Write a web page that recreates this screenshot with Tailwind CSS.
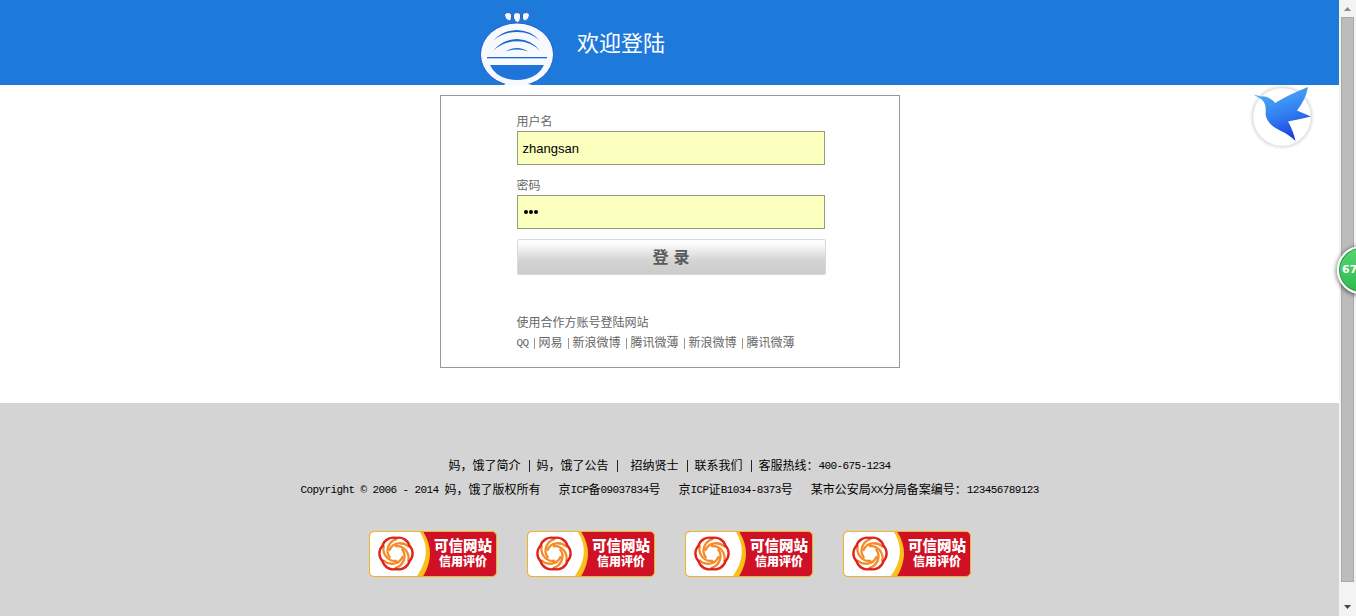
<!DOCTYPE html>
<html lang="zh-CN">
<head>
<meta charset="utf-8">
<title>欢迎登陆</title>
<script src="https://cdn.jsdelivr.net/npm/@tailwindcss/browser@4"></script>
</head>
<body class="relative flex h-[616px] w-[1356px] overflow-hidden bg-white font-['Liberation_Sans','Noto_Sans_CJK_SC',sans-serif]">
<svg class="absolute h-0 w-0" aria-hidden="true">
  <defs>
    <g id="petal">
      <path d="M39.500 15C34 10 24 10.500 20.500 18.500" stroke="#f58a28" stroke-width="2.300"/>
      <path d="M27 6.500A11 11 0 0 1 40.400 14.250" stroke="#e0241c" stroke-width="2.400"/>
    </g>
    <symbol id="trust" viewBox="0 0 128 46">
      <rect x=".5" y=".5" width="127" height="45" rx="4.5" fill="#d01024"/>
      <path d="M5 .5H54Q68 22 54 45.500H5Q.5 45.500 .5 41V5Q.5 .5 5 .5Z" fill="#f8c018"/>
      <path d="M5 1H51Q64 22 48 45H5Q1 45 1 41V5Q1 1 5 1Z" fill="#fff"/>
      <rect x=".5" y=".5" width="127" height="45" rx="4.500" fill="none" stroke="#f0b428"/>
      <g fill="none" stroke-linecap="round" transform="translate(0 .5)">
        <use href="#petal"/>
        <use href="#petal" transform="rotate(60 27 22)"/>
        <use href="#petal" transform="rotate(120 27 22)"/>
        <use href="#petal" transform="rotate(180 27 22)"/>
        <use href="#petal" transform="rotate(240 27 22)"/>
        <use href="#petal" transform="rotate(300 27 22)"/>
      </g>
    </symbol>
  </defs>
</svg>

<div class="flex w-[1339px] flex-col">
  <header class="flex h-[85px] shrink-0 bg-[#1e7ada] pl-[479px]">
    <svg class="h-[85px] w-[76px]" viewBox="479 0 76 85">
      <g fill="#f6faff" stroke="#1b55cc" stroke-width=".9">
        <path d="M504.500 15Q504.500 12.500 508 12.500Q511.500 12.500 511.500 15V18Q511 21 509 21Q504.500 19 504.500 15Z"/>
        <path d="M513.500 15Q513.500 12.500 517 12.500Q520.500 12.500 520.500 15V18Q520 22.500 517.500 22.500Q515 22.500 513.500 18Z"/>
        <path d="M529.500 15Q529.500 12.500 526 12.500Q522.500 12.500 522.500 15V18Q523 21 525 21Q529.500 19 529.500 15Z"/>
        <ellipse cx="517" cy="54.500" rx="36.500" ry="31.500"/>
      </g>
      <path d="M503 85Q517 79 532 85Z" fill="#f6faff"/>
      <path d="M490 65H544Q539 76 526 79Q517 81 508 79Q495 76 490 65Z" fill="#1e74d8"/>
      <g fill="#1b66cf">
        <path d="M493 41Q502 30.500 517 30Q532 30.500 540 41Q531 32 517 32Q503 32 493 41Z"/>
        <path d="M493 51Q502 39.500 517 39Q532 39.500 540 51Q531 41.300 517 41.300Q503 41.300 493 51Z"/>
        <path d="M505 51.500Q511 48 517 48Q523 48 528 51.500Q523 49.500 517 49.500Q511 49.500 505 51.500Z"/>
        <rect x="487" y="57" width="60" height="1.300"/>
      </g>
    </svg>
    <h1 class="ml-[22px] mt-[28px] text-[22px] leading-[32px] text-white">欢迎登陆</h1>
  </header>

  <main class="flex h-[318px] shrink-0 justify-center pt-[10px]">
    <form class="flex h-[273px] w-[460px] flex-col border border-[#93999f] pl-[76px] text-[12px] text-[#666]">
      <label class="mt-[17px] h-[18px] leading-[19px]">用户名</label>
      <div class="flex h-[34px] w-[308px] items-center border border-[#989b82] bg-[#faffbd] pl-[5px] pt-[2px] text-[13px] text-black">zhangsan</div>
      <label class="mt-[12px] h-[18px] leading-[19px]">密码</label>
      <div class="flex h-[34px] w-[308px] items-center gap-[1px] border border-[#989b82] bg-[#faffbd] pl-[6px]">
        <span class="size-[4px] rounded-full bg-black"></span><span class="size-[4px] rounded-full bg-black"></span><span class="size-[4px] rounded-full bg-black"></span>
      </div>
      <div class="mt-[10px] flex h-[36px] w-[309px] items-center justify-center gap-[5px] rounded-[2px] border border-[#d6d9e4] bg-linear-to-b from-[#fdfdfd] from-10% via-[#d4d4d4] via-60% to-[#cbcbcb] pt-[2px] text-[16px] font-bold text-[#5a5a5a]"><span>登</span><span>录</span></div>
      <p class="mt-[38px] h-[20px] leading-[20px]">使用合作方账号登陆网站</p>
      <div class="flex h-[20px] items-center leading-[20px]">
        <span class="w-[12px] font-['Liberation_Mono',monospace] text-[11px] tracking-[-0.600px]">QQ</span>
        <i class="ml-[5px] mr-[4px] h-[11px] w-px bg-[#999]"></i><span class="w-[24px]">网易</span>
        <i class="ml-[5px] mr-[4px] h-[11px] w-px bg-[#999]"></i><span class="w-[48px]">新浪微博</span>
        <i class="ml-[5px] mr-[4px] h-[11px] w-px bg-[#999]"></i><span class="w-[48px]">腾讯微薄</span>
        <i class="ml-[5px] mr-[4px] h-[11px] w-px bg-[#999]"></i><span class="w-[48px]">新浪微博</span>
        <i class="ml-[5px] mr-[4px] h-[11px] w-px bg-[#999]"></i><span class="w-[48px]">腾讯微薄</span>
      </div>
    </form>
  </main>

  <footer class="flex h-[213px] shrink-0 flex-col bg-[#d4d4d4] pt-[51px] text-[12px] leading-[24px] whitespace-pre text-black">
    <div class="flex h-[24px] items-center pl-[448.500px]">
      <span class="w-[72px]">妈，饿了简介</span><i class="ml-[8.500px] mr-[6.500px] h-[12px] w-px bg-[#222]"></i>
      <span class="w-[72px]">妈，饿了公告</span><i class="ml-[8.500px] mr-[12.500px] h-[12px] w-px bg-[#222]"></i>
      <span class="w-[48px]">招纳贤士</span><i class="ml-[8.500px] mr-[6.500px] h-[12px] w-px bg-[#222]"></i>
      <span class="w-[48px]">联系我们</span><i class="ml-[8.500px] mr-[6.500px] h-[12px] w-px bg-[#222]"></i>
      <span class="w-[60px]">客服热线：</span><span class="font-['Liberation_Mono',monospace] text-[11px] tracking-[-0.600px]">400-675-1234</span>
    </div>
    <div class="flex h-[24px] items-center pl-[300.500px]">
      <span class="w-[144px] font-['Liberation_Mono',monospace] text-[11px] tracking-[-0.600px]">Copyright © 2006 - 2014</span><span class="w-[114px]">妈，饿了版权所有</span>
      <span>京</span><span class="font-['Liberation_Mono',monospace] text-[11px] tracking-[-0.600px]">ICP</span><span>备</span><span class="font-['Liberation_Mono',monospace] text-[11px] tracking-[-0.600px]">09037834</span><span class="mr-[18px]">号</span>
      <span>京</span><span class="font-['Liberation_Mono',monospace] text-[11px] tracking-[-0.600px]">ICP</span><span>证</span><span class="font-['Liberation_Mono',monospace] text-[11px] tracking-[-0.600px]">B1034-8373</span><span class="mr-[18px]">号</span>
      <span>某市公安局</span><span class="font-['Liberation_Mono',monospace] text-[11px] tracking-[-0.600px]">XX</span><span>分局备案编号：</span><span class="font-['Liberation_Mono',monospace] text-[11px] tracking-[-0.600px]">123456789123</span>
    </div>
    <div class="mt-[29px] flex gap-[30px] pl-[369px] font-bold text-white">
      <div class="relative h-[46px] w-[128px]"><svg class="size-full"><use href="#trust"/></svg><div class="absolute right-[5px] top-[5px] flex flex-col items-end"><b class="text-[14.500px] leading-[20px]">可信网站</b><b class="mr-[5px] text-[12px] leading-[13px]">信用评价</b></div></div>
      <div class="relative h-[46px] w-[128px]"><svg class="size-full"><use href="#trust"/></svg><div class="absolute right-[5px] top-[5px] flex flex-col items-end"><b class="text-[14.500px] leading-[20px]">可信网站</b><b class="mr-[5px] text-[12px] leading-[13px]">信用评价</b></div></div>
      <div class="relative h-[46px] w-[128px]"><svg class="size-full"><use href="#trust"/></svg><div class="absolute right-[5px] top-[5px] flex flex-col items-end"><b class="text-[14.500px] leading-[20px]">可信网站</b><b class="mr-[5px] text-[12px] leading-[13px]">信用评价</b></div></div>
      <div class="relative h-[46px] w-[128px]"><svg class="size-full"><use href="#trust"/></svg><div class="absolute right-[5px] top-[5px] flex flex-col items-end"><b class="text-[14.500px] leading-[20px]">可信网站</b><b class="mr-[5px] text-[12px] leading-[13px]">信用评价</b></div></div>
    </div>
  </footer>
</div>

<!-- scrollbar -->
<div class="flex w-[17px] flex-col items-center bg-[#f3f3f3]">
  <svg class="h-[17px] w-[17px]" viewBox="0 0 17 17"><path d="M5 11H12L8.500 7Z" fill="#8a8a8a"/></svg>
  <div class="h-[565px] w-[13px] border border-[#a9a9a9] bg-[#bcbcbc]"></div>
  <svg class="mt-[17px] h-[17px] w-[17px]" viewBox="0 0 17 17"><path d="M5 6H12L8.500 10Z" fill="#444"/></svg>
</div>

<!-- floating bird button -->
<svg class="absolute left-[1245px] top-[80px] h-[74px] w-[74px]" viewBox="1245 80 74 74">
  <defs><linearGradient id="bird" x1=".3" y1="0" x2=".65" y2="1"><stop offset="0" stop-color="#4fb0f6"/><stop offset=".55" stop-color="#2f7cf0"/><stop offset="1" stop-color="#1c35dc"/></linearGradient>
  <clipPath id="below"><rect x="1245" y="85" width="74" height="69"/></clipPath></defs>
  <g clip-path="url(#below)"><circle cx="1282" cy="117" r="30" fill="#fff" stroke="#f3f3f3" stroke-width="4"/><circle cx="1282" cy="117" r="29.500" fill="#fff" stroke="#e4e4e4" stroke-width="1.500"/></g>
  <path d="M1253.500 94.500L1261 96.500Q1265 95.500 1269 98Q1273 100 1275 103Q1290 94 1308 87Q1306 99 1297 110.500L1311 116.500Q1301 119 1288 121.500Q1293 130 1295.500 141Q1288 134 1281 131Q1267 125 1265.500 114Q1267 103 1261 99Z" fill="url(#bird)"/>
</svg>

<!-- floating score ball -->
<div class="absolute left-[1337px] top-[246px] flex size-[48px] items-center rounded-full border-2 border-white bg-linear-to-b from-[#54d672] to-[#30b94f] pl-[3px] text-[11px] font-bold text-white shadow-[0_1px_4px_1px_rgba(0,0,0,0.5),inset_0_0_0_1px_#2a9944] font-['DejaVu_Sans','Liberation_Sans',sans-serif]">67</div>
</body>
</html>
